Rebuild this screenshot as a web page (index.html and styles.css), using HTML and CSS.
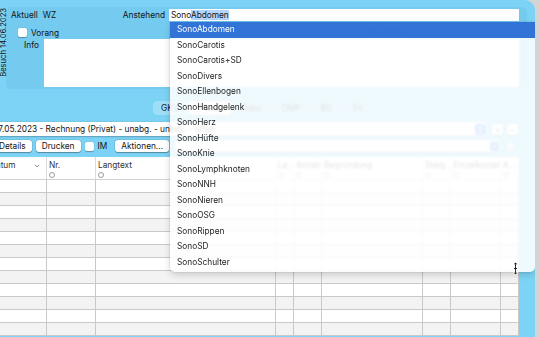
FILE: index.html
```html
<!DOCTYPE html>
<html lang="de">
<head>
    <meta charset="UTF-8">
    <meta name="viewport" content="width=device-width, initial-scale=1.0">
    <title>Besuch</title>
    <link rel="stylesheet" href="styles.css">
</head>
<body>
<div class="window">
    <div class="visit">
        <div class="visit-date"><span>Besuch 14.06.2023</span></div>
        <div class="visit-box">
            <div class="visit-line">
                <span>Aktuell</span>
                <span class="current">WZ</span>
                <span class="next-label">Anstehend</span>
                <div class="next-input">Sono<span class="selection">Abdomen</span></div>
            </div>
            <div class="visit-line checks">
                <label class="check"><span class="check-box"></span>Vorang</label>
                <label class="check check-kontroll"><span class="check-box"></span>Kontroll</label>
            </div>
            <div class="info-line">
                <span class="info-label">Info</span>
                <div class="info-text"></div>
            </div>
        </div>
    </div>

    <div class="segments">
        <span class="segment first">GKV</span>
        <span class="segment active">Privat</span>
        <span class="segment">Doku</span>
        <span class="segment">DMP</span>
        <span class="segment">BG</span>
        <span class="segment">SV</span>
    </div>

    <div class="sheet">
        <div class="bill-row">
            <div class="popup">
                <span>17.05.2023 - Rechnung (Privat) - unabg. - unbez. - offen</span>
                <span class="stepper">
                    <svg width="11" height="11" viewBox="0 0 11 11"><path d="M3.3 4.3 L5.5 2.3 L7.7 4.3 M3.3 6.7 L5.5 8.7 L7.7 6.7" fill="none" stroke="#fff" stroke-width="1.1" stroke-linecap="round" stroke-linejoin="round"/></svg>
                </span>
            </div>
            <span class="square-btn">+</span>
            <span class="square-btn">&minus;</span>
        </div>

        <div class="btn-row">
            <span class="button">Details</span>
            <span class="button">Drucken</span>
            <label class="check im"><span class="check-box"></span>IM</label>
            <span class="button actions">Aktionen...</span>
            <div class="combo">
                <span class="combo-arrow">
                    <svg width="9" height="9" viewBox="0 0 9 9"><path d="M2.5 3.6 L4.5 5.6 L6.5 3.6" fill="none" stroke="#fff" stroke-width="1.1" stroke-linecap="round" stroke-linejoin="round"/></svg>
                </span>
            </div>
            <svg class="round-icon" width="9" height="9" viewBox="0 0 9 9"><circle cx="4.5" cy="4.5" r="3.8" fill="#fff" stroke="#9a9a9a" stroke-width="0.8"/><path d="M2.8 4.5 A1.7 1.7 0 1 0 4.5 2.8" fill="none" stroke="#9a9a9a" stroke-width="0.8"/></svg>
        </div>

        <div class="table">
            <div class="thead">
                <div class="th"><div class="th-title"><span>Datum</span><svg width="6" height="4" viewBox="0 0 6 4"><path d="M0.8 0.8 L3 3 L5.2 0.8" fill="none" stroke="#777" stroke-width="0.8"/></svg></div><span class="radio"></span></div>
                <div class="th"><div class="th-title">Nr.</div><span class="radio"></span></div>
                <div class="th"><div class="th-title">Langtext</div><span class="radio"></span></div>
                <div class="th"><div class="th-title">Le...</div><span class="radio"></span></div>
                <div class="th"><div class="th-title">Anzahl</div><span class="radio"></span></div>
                <div class="th"><div class="th-title">Begründung</div><span class="radio"></span></div>
                <div class="th"><div class="th-title">Steig...</div><span class="radio"></span></div>
                <div class="th"><div class="th-title">Einzelkosten</div><span class="radio"></span></div>
                <div class="th"><div class="th-title">A...</div><span class="radio"></span></div>
            </div>
            <div class="tr"><span></span><span></span><span></span><span></span><span></span><span></span><span></span><span></span><span></span></div>
            <div class="tr"><span></span><span></span><span></span><span></span><span></span><span></span><span></span><span></span><span></span></div>
            <div class="tr"><span></span><span></span><span></span><span></span><span></span><span></span><span></span><span></span><span></span></div>
            <div class="tr"><span></span><span></span><span></span><span></span><span></span><span></span><span></span><span></span><span></span></div>
            <div class="tr"><span></span><span></span><span></span><span></span><span></span><span></span><span></span><span></span><span></span></div>
            <div class="tr"><span></span><span></span><span></span><span></span><span></span><span></span><span></span><span></span><span></span></div>
            <div class="tr"><span></span><span></span><span></span><span></span><span></span><span></span><span></span><span></span><span></span></div>
            <div class="tr"><span></span><span></span><span></span><span></span><span></span><span></span><span></span><span></span><span></span></div>
            <div class="tr"><span></span><span></span><span></span><span></span><span></span><span></span><span></span><span></span><span></span></div>
            <div class="tr"><span></span><span></span><span></span><span></span><span></span><span></span><span></span><span></span><span></span></div>
            <div class="tr"><span></span><span></span><span></span><span></span><span></span><span></span><span></span><span></span><span></span></div>
            <div class="tr"><span></span><span></span><span></span><span></span><span></span><span></span><span></span><span></span><span></span></div>
        </div>
    </div>

    <!-- Autocomplete list of the "Anstehend" field -->
    <ul class="suggestions">
        <li class="current-item">SonoAbdomen</li>
        <li>SonoCarotis</li>
        <li>SonoCarotis+SD</li>
        <li>SonoDivers</li>
        <li>SonoEllenbogen</li>
        <li>SonoHandgelenk</li>
        <li>SonoHerz</li>
        <li>SonoHüfte</li>
        <li>SonoKnie</li>
        <li>SonoLymphknoten</li>
        <li>SonoNNH</li>
        <li>SonoNieren</li>
        <li>SonoOSG</li>
        <li>SonoRippen</li>
        <li>SonoSD</li>
        <li>SonoSchulter</li>
    </ul>

    <svg class="mouse" width="7" height="15" viewBox="0 0 7 15">
        <path d="M3.5 0.5 L6.2 3.6 L4.4 3.6 L4.4 11.4 L6.2 11.4 L3.5 14.5 L0.8 11.4 L2.6 11.4 L2.6 3.6 L0.8 3.6 Z" fill="#fff"/>
        <path d="M3.5 1.6 L5.2 3.2 L1.8 3.2 Z M3.5 13.4 L5.2 11.8 L1.8 11.8 Z" fill="#111"/>
        <path d="M3.5 3.2 L3.5 11.8 M2 7.5 L5 7.5" stroke="#111" stroke-width="0.9"/>
    </svg>
</div>
</body>
</html>
```

FILE: styles.css
```css
* {
    box-sizing: border-box;
}
body {
    margin: 0;
    background-color: #d4d4d4;
    font-family: Inter, "Liberation Sans", sans-serif;
    font-size: 8.3px;
    color: #141414;
    overflow: hidden;
}
.window {
    position: relative;
    width: 535px;
    height: 337px;
    background-color: #7dd3f5;
    border-top-right-radius: 10px;
    overflow: hidden;
}

/* top group: visit */
.visit {
    display: flex;
    padding-top: 7px;
}
.visit-date {
    display: flex;
    align-items: flex-start;
    width: 6px;
    flex: none;
}
.visit-date span {
    writing-mode: vertical-rl;
    transform: rotate(180deg);
    font-size: 7.6px;
    line-height: 7px;
    margin-top: 1px;
    white-space: nowrap;
}
.visit-box {
    width: 521px;
    height: 82px;
    padding: 2px 8px 2px 5px;
    background-color: #74cbef;
    border-radius: 5px;
}
.visit-line {
    display: flex;
    align-items: center;
    height: 12px;
}
.current {
    margin-left: 5px;
}
.next-label {
    margin-left: auto;
    margin-right: 4px;
}
.next-input {
    width: 350px;
    height: 12px;
    padding-left: 2px;
    line-height: 12px;
    background-color: #fff;
}
.selection {
    background-color: #b4d5fe;
}
.checks {
    height: 18px;
    padding: 5px 0 0 7px;
}
.check {
    display: flex;
    align-items: center;
    gap: 4px;
}
.check-box {
    width: 9px;
    height: 9px;
    background-color: #fff;
    border-radius: 2px;
    box-shadow: 0 0.5px 1px rgba(0, 0, 0, 0.3);
}
.check-kontroll {
    margin-left: 299px;
}
.info-line {
    display: flex;
    align-items: flex-start;
    gap: 5px;
    padding-left: 13px;
}
.info-label {
    padding-top: 1px;
}
.info-text {
    width: 481px;
    height: 48px;
    background-color: #fff;
}

/* segmented control */
.segments {
    display: flex;
    width: fit-content;
    height: 14px;
    margin: 12px 0 0 153px;
    border-radius: 4px;
    background-color: rgba(255, 255, 255, 0.12);
}
.segment {
    padding: 0 10px;
    line-height: 14px;
    border-radius: 4px;
}
.segment.first {
    padding-left: 8px;
    background-color: rgba(255, 255, 255, 0.16);
}
.segment.active {
    background-color: #fff;
    box-shadow: 0 0.5px 1px rgba(0, 0, 0, 0.2);
}

/* lower sheet, scrolled a little to the right */
.sheet {
    width: 533px;
    margin: 7px 0 0 -14px;
}
.bill-row {
    display: flex;
    align-items: center;
    gap: 4px;
    height: 14px;
}
.popup {
    display: flex;
    align-items: center;
    width: 501px;
    height: 14px;
    margin-right: 1px;
    padding: 0 1px 0 9px;
    background-color: #fff;
    border-radius: 3px;
    box-shadow: 0 0.5px 1.5px rgba(0, 0, 0, 0.25);
    white-space: nowrap;
}
.stepper {
    display: flex;
    width: 11px;
    height: 11px;
    margin-left: auto;
    background-color: #2f7df6;
    border-radius: 3px;
}
.square-btn {
    width: 11px;
    height: 11px;
    line-height: 11px;
    text-align: center;
    font-size: 10px;
    color: #555;
    background-color: #fff;
    border-radius: 3px;
    box-shadow: 0 0 0 0.5px rgba(0, 0, 0, 0.2), 0 0.5px 1px rgba(0, 0, 0, 0.2);
}
.btn-row {
    display: flex;
    align-items: center;
    height: 12px;
    margin-top: 4px;
    padding: 0 4px 0 7px;
}
.button {
    height: 12px;
    padding: 0 6px;
    line-height: 12px;
    background-color: #fff;
    border-radius: 3px;
    box-shadow: 0 0 0 0.5px rgba(0, 0, 0, 0.12), 0 0.5px 1px rgba(0, 0, 0, 0.3);
    white-space: nowrap;
}
.button + .button {
    margin-left: 4px;
}
.im {
    margin: 0 8px 0 4px;
}
.combo {
    display: flex;
    align-items: center;
    flex: 1;
    height: 12px;
    margin: 0 6px;
    padding-right: 1.5px;
    background-color: #fff;
    border-radius: 3px;
    box-shadow: 0 0.5px 1.5px rgba(0, 0, 0, 0.25);
}
.combo-arrow {
    display: flex;
    width: 9px;
    height: 9px;
    margin-left: auto;
    background-color: #2f7df6;
    border-radius: 2px;
}
.round-icon {
    flex: none;
}

/* table */
.table {
    margin-top: 5px;
    background-color: #fff;
}
.thead,
.tr {
    display: grid;
    grid-template-columns: 61px 49px 180px 18px 28px 101px 28px 50px 18px;
}
.thead {
    height: 23px;
    border-bottom: 1px solid #d2d2d2;
}
.th {
    padding: 4px 2px 0 4px;
    border-right: 1px solid #dcdcdc;
    overflow: hidden;
    white-space: nowrap;
}
.th:nth-child(n+2) {
    padding-left: 2px;
}
.th-title {
    display: flex;
    justify-content: space-between;
    align-items: center;
    height: 9px;
    line-height: 9px;
    color: #333;
}
.th-title svg {
    margin-right: 4px;
}
.radio {
    display: block;
    width: 6px;
    height: 6px;
    margin-top: 2px;
    border: 0.8px solid #9c9c9c;
    border-radius: 50%;
}
.tr {
    height: 13px;
    border-bottom: 1px solid #c9c9c9;
}
.tr:nth-child(odd) {
    background-color: #f3f3f3;
}
.tr span {
    border-right: 1px solid #c9c9c9;
}

/* autocomplete menu */
.suggestions {
    position: absolute;
    left: 170px;
    top: 22px;
    width: 365px;
    margin: 0;
    padding: 0 0 2px;
    list-style: none;
    background-color: rgba(255, 255, 255, 0.87);
    backdrop-filter: blur(1px);
    border-radius: 0 0 5px 5px;
    box-shadow: 0 3px 7px rgba(0, 0, 0, 0.16), 0 0 0 0.5px rgba(0, 0, 0, 0.1);
}
.suggestions li {
    height: 15.5px;
    padding-left: 7px;
    line-height: 15.5px;
    color: #1c1c1c;
}
.suggestions li.current-item {
    color: #fff;
    background-color: rgba(29, 100, 211, 0.9);
}
.mouse {
    position: absolute;
    left: 512px;
    top: 261px;
}
```
